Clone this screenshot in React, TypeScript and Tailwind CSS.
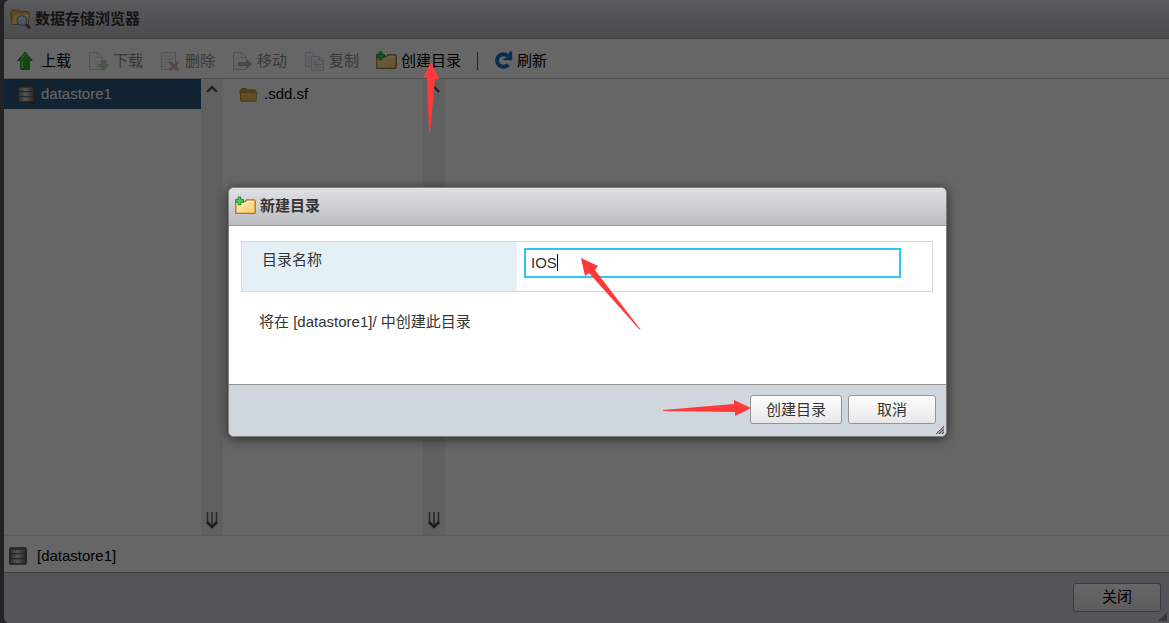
import React, { useId, useState } from 'react';

const toolbarItems = [
  { label: '上载', icon: 'upload', enabled: true },
  { label: '下载', icon: 'download', enabled: false },
  { label: '删除', icon: 'delete', enabled: false },
  { label: '移动', icon: 'move', enabled: false },
  { label: '复制', icon: 'copy', enabled: false },
  { label: '创建目录', icon: 'new-folder', enabled: true },
];

const NewFolderIcon = () => {
  const fill = useId();
  return (
    <svg width="21" height="20" viewBox="0 0 21 20" className="shrink-0">
      <defs>
        <linearGradient id={fill} x1="0" y1="0" x2="1" y2="1">
          <stop offset="0" stopColor="#fff0c4" />
          <stop offset="1" stopColor="#fcc863" />
        </linearGradient>
      </defs>
      <path d="M.8 17.3V5.5h9.5l1.5-1.7h7.4q1 0 1 1v11.6q0 1-1 1z" fill={`url(#${fill})`} stroke="#a87722" strokeWidth="1.3" />
      <path d="M1.8 7.5h9l1.8-2h6.6" fill="none" stroke="#fff4d5" />
      <path d="M3.2 1h2.6v2.6h2.7v2.6H5.8v2.7H3.2V6.2H.6V3.6h2.6z" fill="#4fd05c" stroke="#188a2c" strokeWidth="1" />
    </svg>
  );
};

const DatastoreIcon = () => {
  const metal = useId();
  return (
    <svg width="18" height="18" viewBox="0 0 18 18" className="shrink-0">
      <defs>
        <linearGradient id={metal}>
          <stop offset="0" stopColor="#6a6a6a" />
          <stop offset=".45" stopColor="#d4d4d4" />
          <stop offset="1" stopColor="#5c5c5c" />
        </linearGradient>
      </defs>
      <rect x=".8" y="1" width="16.4" height="16" rx="1.2" fill={`url(#${metal})`} stroke="#4a4a4a" strokeWidth="1.4" />
      <path d="M1 6.5q8 .6 16 0M1 11.5q8 .6 16 0" fill="none" stroke="#555" />
      <path d="M2 2.5h14" stroke="#777" />
    </svg>
  );
};

const BrowseIcon = () => (
  <svg width="21" height="20" viewBox="0 0 21 20" className="shrink-0">
    <path d="M2 15.5L.8 3.5 3 1h6l1.5 1.5H18l1.5 2-1.2 11z" fill="#edb54f" stroke="#b77c20" />
    <path d="M2.5 15L4 5.5h15L17.5 15z" fill="#ffdc91" />
    <path d="M15.5 15l3.8 3.5" stroke="#555" strokeWidth="2.6" strokeLinecap="round" />
    <circle cx="12" cy="11.5" r="4.8" fill="#b8dcf4" stroke="#8095aa" strokeWidth="1.5" />
    <path d="M9.5 11q.5-2.6 3.3-2.8" stroke="#fff" strokeWidth="1.4" fill="none" />
  </svg>
);

const FolderIcon = () => (
  <svg width="19" height="15" viewBox="0 0 19 15" className="shrink-0">
    <path d="M2 14L1 3.5 3 1.5h4L8.5 3H16l1 2-.5 9z" fill="#cda43c" stroke="#a9822b" />
    <path d="M2 14L1 5.5h17L17 14z" fill="#e9c662" stroke="#b99236" strokeWidth=".8" />
  </svg>
);

const RefreshIcon = () => (
  <svg width="19" height="19" viewBox="0 0 19 19" className="shrink-0">
    <path d="M14.2 13.6A6.3 6.3 0 1 1 13.8 5" fill="none" stroke="#1b70c2" strokeWidth="4" />
    <path d="M18.2.5v8.8H9.3V7.8L13 6.5 15.2 3V.5z" fill="#1b70c2" />
  </svg>
);

const ToolIcon = ({ name }: { name: string }) => {
  if (name === 'new-folder') return <NewFolderIcon />;
  if (name === 'upload') {
    return (
      <svg width="16" height="20" viewBox="0 0 16 20" className="shrink-0">
        <path d="M8 1.2l7.2 8.3h-3V18.4H3.8V9.5h-3z" fill="#3cb52f" stroke="#1d7d18" strokeLinejoin="round" />
        <path d="M8 2.8L4 8.2M5.2 9v8" fill="none" stroke="#7ddc6c" strokeWidth="1.4" />
      </svg>
    );
  }
  return (
    <svg width="21" height="20" viewBox="0 0 21 20" className="shrink-0 opacity-40">
      {name === 'copy' ? (
        <g fill="#e8eff8" stroke="#6b89ac">
          <path d="M1.5 1.5h6l4 4v10h-10z" />
          <path d="M7.5 5.5h8l4 4v9.8h-12z" />
          <path d="M15.5 5.5v4h4M9.5 11h4M9.5 13.5h8M9.5 16h8M3.5 6h3M3.5 9h3M3.5 12h3" />
        </g>
      ) : (
        <path
          d={name === 'delete' ? 'M1.5 1.5h14v17h-14z' : 'M1.5 1.5h8l5 5v12h-13zM9.5 1.5v5h5'}
          fill="#f3f5f8"
          stroke={name === 'move' ? '#777' : '#6f87a5'}
        />
      )}
      {name === 'download' && <path d="M13 9.5h5v4h3l-5.5 6-5.5-6h3z" fill="#3aa535" stroke="#2a8126" strokeWidth=".5" />}
      {name === 'delete' && (
        <>
          <path d="M4 5h2M7 5h6M4 8h2M7 8h6M4 11h2M7 11h3M4 14h2" stroke="#6f87a5" />
          <path d="M9.5 11l9 8M18.5 11l-9 8" stroke="#dc2828" strokeWidth="3" />
        </>
      )}
      {name === 'move' && <path d="M6 11h8V7.5l6 5.5-6 5.5V15H6z" fill="#444" />}
    </svg>
  );
};

const ScrollRail = () => (
  <div className="flex w-[22px] shrink-0 flex-col items-center justify-between bg-[#f0f0f0] pt-[5px] pb-1">
    <svg width="12" height="10" viewBox="0 0 12 10">
      <path d="M1 8l5-5 5 5" fill="none" stroke="#555" strokeWidth="2.4" />
    </svg>
    <svg width="12" height="20" viewBox="0 0 12 20">
      <path d="M1.5 1v12M6 1v14M10.5 1v12" stroke="#666" strokeWidth="1.6" />
      <path d="M1 11l5 5 5-5" fill="none" stroke="#444" strokeWidth="2.6" />
    </svg>
  </div>
);

const ResizeGrip = () => (
  <svg width="8" height="8" viewBox="0 0 8 8" className="absolute right-0.5 bottom-0.5">
    <path d="M8 0v8H0z" fill="#9a9da3" />
    <path d="M0 8L8 0M3 8l5-5M6 8l2-2" stroke="#555" strokeWidth=".9" />
  </svg>
);

const buttonClass =
  'h-[29px] rounded-[3px] border border-[#949494] bg-linear-to-b from-white to-[#e6e6e6] text-center leading-5';
const titleClass = 'flex items-center bg-linear-to-b from-[#e0e1e5] to-[#bbbcc0] font-bold border-b border-[#9d9da0]';

export default function App() {
  const [folderName, setFolderName] = useState('IOS');

  return (
    <div className="relative flex min-h-screen bg-[#585858] font-['Liberation_Sans','Noto_Sans_CJK_SC',sans-serif] text-[15px] leading-5 text-[#333]">
      <main className="ml-1 flex min-w-0 flex-1 flex-col overflow-hidden rounded-l-md bg-white">
        <header className={`${titleClass} h-[39px] gap-1 pl-1.5`}>
          <BrowseIcon />
          <h1>数据存储浏览器</h1>
        </header>

        <nav className="flex h-10 shrink-0 items-center border-b border-[#c4c4c4] pl-[13px] pt-1 text-black">
          <div className="flex items-center gap-[17px]">
            {toolbarItems.map(item => (
              <button key={item.label} disabled={!item.enabled} className="flex items-center gap-1 disabled:text-[#8d8d8d] first:gap-2">
                <ToolIcon name={item.icon} />
                {item.label}
              </button>
            ))}
          </div>
          <div className="mx-4 h-[18px] w-px bg-[#555]"></div>
          <button className="flex items-center gap-1">
            <RefreshIcon />
            刷新
          </button>
        </nav>

        <section className="flex flex-1">
          <div className="w-[197px] shrink-0">
            <button className="flex h-[30px] w-full items-center gap-1.5 bg-[#2b567e] pl-[13px] text-white">
              <DatastoreIcon />
              datastore1
            </button>
          </div>
          <ScrollRail />
          <div className="w-[200px] shrink-0">
            <button className="flex h-[30px] w-full items-center gap-1.5 pl-4 text-black">
              <FolderIcon />
              .sdd.sf
            </button>
          </div>
          <ScrollRail />
        </section>

        <div className="flex h-[37px] items-center gap-2.5 border-t border-[#e6e6e6] pt-1 pl-[5px] text-black">
          <DatastoreIcon />
          [datastore1]
        </div>

        <footer className="relative flex h-[51px] items-center justify-end border-t border-[#8c8f94] bg-[#d0d4dc] pr-2 pb-0.5 text-black">
          <button className={`${buttonClass} w-[88px]`}>关闭</button>
          <ResizeGrip />
        </footer>
      </main>

      <div className="absolute inset-0 flex items-center justify-center bg-black/60 pl-1.5">
        <div role="dialog" aria-labelledby="new-folder-title" className="relative w-full max-w-[719px] rounded-md border border-[#808080] bg-white shadow-[0_2px_12px_rgba(0,0,0,0.6)]">
          <header className={`${titleClass} h-[38px] gap-1 rounded-t-[5px] pl-1.5`}>
            <NewFolderIcon />
            <h2 id="new-folder-title">新建目录</h2>
          </header>

          <div className="h-[158px] pt-[15px] pr-[13px] pl-3">
            <div className="flex h-[51px] border border-[#d6d6d6]">
              <label htmlFor="folder-name" className="w-[275px] shrink-0 bg-[#e4eff6] pt-2 pl-5">目录名称</label>
              <div className="flex-1 py-1.5 pr-[31px] pl-[7px]">
                <div className="relative">
                  <input
                    id="folder-name"
                    value={folderName}
                    onChange={e => setFolderName(e.target.value)}
                    className="h-[30px] w-full border-2 border-[#2fc6f6] bg-white px-[5px] outline-none"
                  />
                  <span className="absolute top-1.5 left-[33px] h-[17px] w-px bg-black"></span>
                </div>
              </div>
            </div>
            <p className="pt-5 pl-[18px]">将在 [datastore1]/ 中创建此目录</p>
          </div>

          <footer className="flex h-[52px] items-center justify-end gap-1.5 rounded-b-[5px] border-t border-[#949494] bg-[#d0d6dd] pr-2.5 pb-px">
            <button className={`${buttonClass} w-[92px]`}>创建目录</button>
            <button className={`${buttonClass} w-[88px]`}>取消</button>
          </footer>
          <ResizeGrip />

          <svg width="60" height="74" viewBox="0 0 60 74" className="pointer-events-none absolute top-[70px] left-[352px]">
            <path d="M0 0l17 8-3 4 46 60-2-1L8 15l-4 3z" fill="#ff3939" />
          </svg>
          <svg width="88" height="18" viewBox="0 0 88 18" className="pointer-events-none absolute right-[195px] bottom-[19px]">
            <path d="M0 11l71-6V1l17 8-16 8v-4L0 12z" fill="#ff3939" />
          </svg>
        </div>
      </div>

      <svg width="18" height="72" viewBox="0 0 18 72" className="pointer-events-none absolute top-[62px] left-[422px]">
        <path d="M9 0l8 17h-4L8 71H7L5 16H1z" fill="#ff3939" />
      </svg>
    </div>
  );
}
